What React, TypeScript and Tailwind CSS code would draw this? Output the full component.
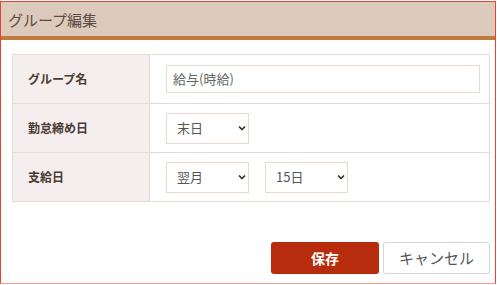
const font = { fontFamily: '"Noto Sans CJK JP", "Noto Sans", sans-serif' };

const Chevron = () => (
  <svg width="8" height="5" viewBox="0 0 8 5" className="absolute right-[3px] top-1/2 -translate-y-1/2 pointer-events-none">
    <path d="M1 1 L4 4 L7 1" fill="none" stroke="#333" strokeWidth="1.7" />
  </svg>
);

const Select = ({ value }: { value: string }) => (
  <div className="relative w-[83px] h-[31px]">
    <div className="w-full h-full border border-[#ead9cf] bg-white flex items-center pl-[10px] text-[13px] text-[#555]">
      {value}
    </div>
    <Chevron />
  </div>
);

const rows = [
  { label: "グループ名", kind: "input" },
  { label: "勤怠締め日", kind: "close" },
  { label: "支給日", kind: "pay" },
];

export default function App() {
  return (
    <div className="w-[497px] h-[285px] bg-white pt-px" style={font}>
      <div className="w-[496px] h-[283px] border border-[#e8432d] border-b-[#f29a8c] flex flex-col">
        <div className="h-[38px] bg-[#dccbbd] border-b-4 border-[#c07a3c] flex items-center pl-[7px]">
          <span className="text-[15px] text-[#5c4a42] leading-none">グループ編集</span>
        </div>
        <div className="ml-[11px] mt-[14px] w-[478px] border border-[#e8dbd2]">
          {rows.map((r, i) => (
            <div key={r.label} className={`flex h-[48px] ${i > 0 ? "h-[49px] border-t border-[#e8dbd2]" : ""}`}>
              <div className="w-[137px] bg-[#f4eeee] border-r border-[#e8dbd2] flex items-center pl-[15px] text-[12px] font-bold text-[#4b3a32]">
                {r.label}
              </div>
              <div className="flex-1 flex items-center pl-4">
                {r.kind === "input" && (
                  <div className="w-[314px] h-[28px] border border-[#ead9cf] flex items-center pl-[6px] text-[13px] text-[#666]">
                    給与(時給)
                  </div>
                )}
                {r.kind === "close" && <Select value="末日" />}
                {r.kind === "pay" && (
                  <div className="flex gap-4">
                    <Select value="翌月" />
                    <Select value="15日" />
                  </div>
                )}
              </div>
            </div>
          ))}
        </div>
        <div className="ml-[11px] w-[478px] mt-[40px] flex justify-end gap-[4px]">
          <button className="w-[108px] h-[32px] bg-[#b72c0c] rounded-[3px] text-white text-[14px] font-bold">
            保存
          </button>
          <button className="w-[107px] h-[32px] border border-[#d4d4d4] rounded-[3px] bg-white text-[#555] text-[15px]">
            キャンセル
          </button>
        </div>
      </div>
    </div>
  );
}
